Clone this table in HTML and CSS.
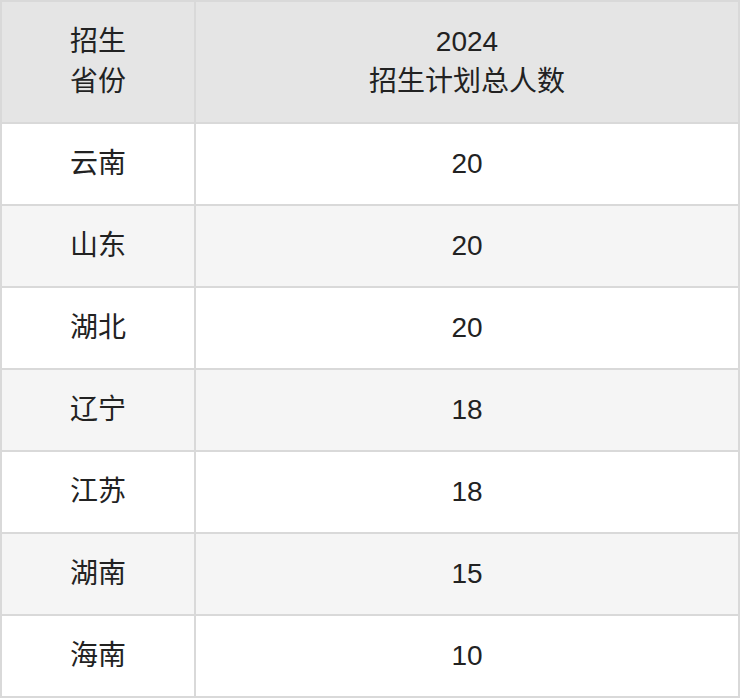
FILE: index.html
```html
<!DOCTYPE html>
<html lang="zh">
<head>
<meta charset="utf-8">
<link rel="stylesheet" href="styles.css">
</head>
<body>
<table class="plan">
  <thead>
    <tr>
      <th class="col-prov">招生<br>省份</th>
      <th class="col-num">2024<br>招生计划总人数</th>
    </tr>
  </thead>
  <tbody>
    <tr><td class="col-prov">云南</td><td>20</td></tr>
    <tr><td class="col-prov">山东</td><td>20</td></tr>
    <tr><td class="col-prov">湖北</td><td>20</td></tr>
    <tr><td class="col-prov">辽宁</td><td>18</td></tr>
    <tr><td class="col-prov">江苏</td><td>18</td></tr>
    <tr><td class="col-prov">湖南</td><td>15</td></tr>
    <tr><td class="col-prov">海南</td><td>10</td></tr>
  </tbody>
</table>
</body>
</html>
```
FILE: styles.css
```css
html, body {
  margin: 0;
  padding: 0;
  background: #ffffff;
}
.plan {
  width: 740px;
  border-collapse: separate;
  border-spacing: 0;
  table-layout: fixed;
  border-top: 2px solid #d9d9d9;
  border-left: 2px solid #d9d9d9;
  font-family: "Liberation Sans", "Noto Sans CJK SC", sans-serif;
  font-size: 28px;
  color: #222222;
}
.plan th,
.plan td {
  padding: 0;
  text-align: center;
  border-right: 2px solid #d9d9d9;
  border-bottom: 2px solid #d9d9d9;
  font-weight: normal;
}
.plan th {
  background: #e5e5e5;
  padding: 20px 0;
  line-height: 40px;
}
.plan td {
  line-height: 80px;
}
.plan .col-prov {
  width: 192px;
}
.plan tbody tr:nth-child(even) td {
  background: #f5f5f5;
}
```
